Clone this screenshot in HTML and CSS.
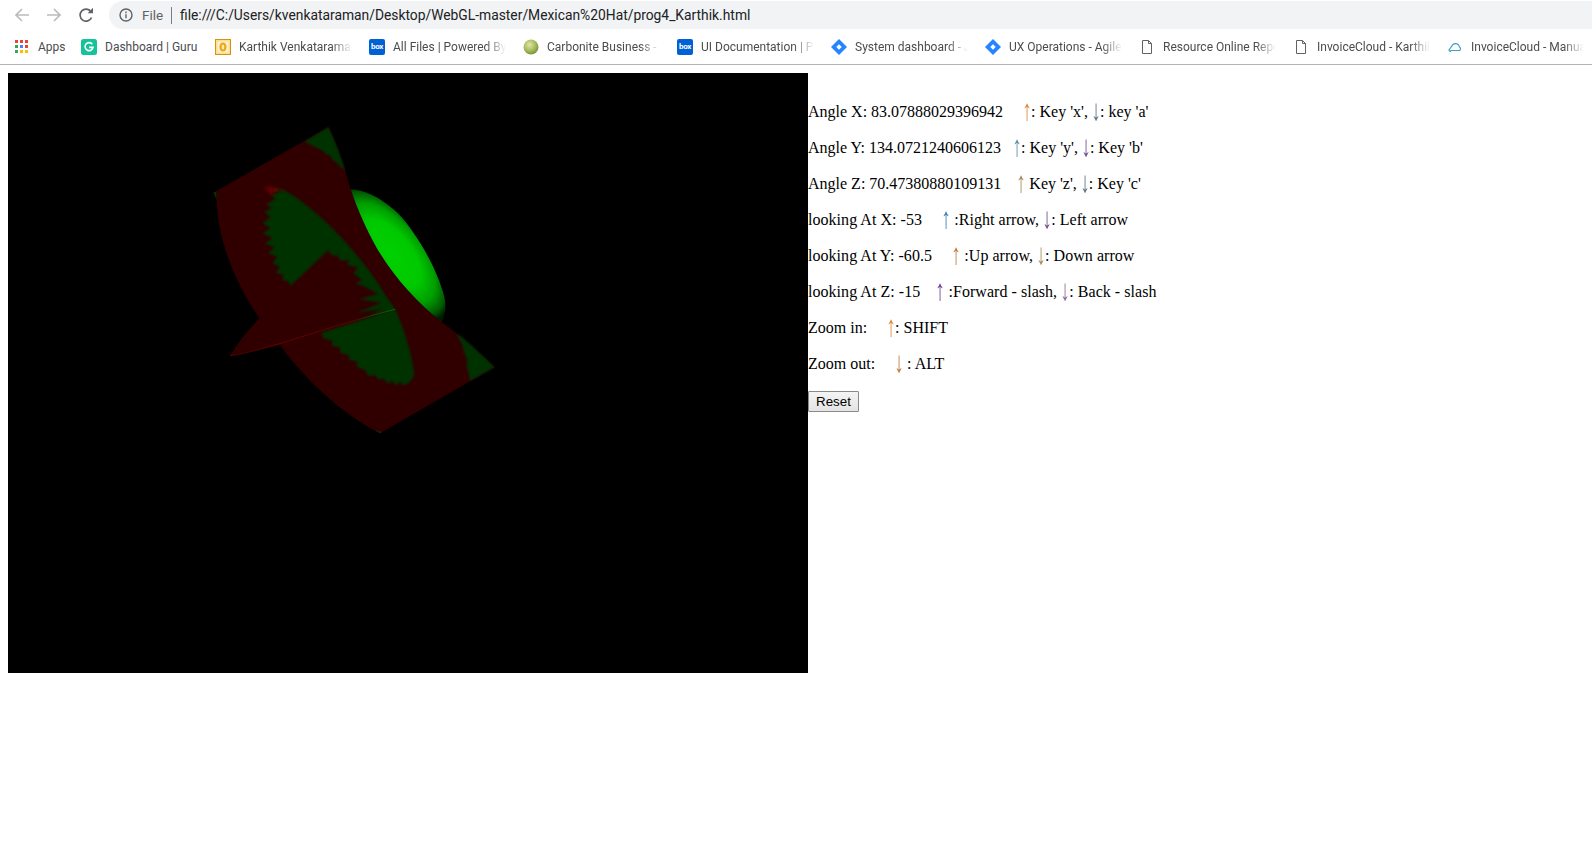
FILE: index.html
```html
<!DOCTYPE html>
<html lang="en">
<head>
<meta charset="utf-8">
<title>prog4_Karthik</title>
<link rel="stylesheet" href="styles.css">
</head>
<body>
<header class="chrome">
  <div class="toolbar">
    <svg class="nav nav-back" viewBox="0 0 16 16"><path d="M15 8H2M8 2 2 8l6 6"/></svg>
    <svg class="nav nav-fwd" viewBox="0 0 16 16"><path d="M1 8h13M8 2l6 6-6 6"/></svg>
    <svg class="nav nav-reload" viewBox="0 0 16 16"><path d="M13.6 10.5A6 6 0 1 1 13 4.7"/><path class="fill" d="M9.6 6.2H15V.8z"/></svg>
    <div class="omnibox">
      <svg class="info" viewBox="0 0 14 14"><circle cx="7" cy="7" r="6"/><path d="M7 6.2v4M7 3.6v1.6"/></svg>
      <span class="scheme">File</span>
      <span class="divider"></span>
      <span class="url">file:///C:/Users/kvenkataraman/Desktop/WebGL-master/Mexican%20Hat/prog4_Karthik.html</span>
    </div>
  </div>
  <nav class="bookmarks">
    <a class="bm bm-apps">
      <svg class="ico-apps" viewBox="0 0 13 13">
        <rect class="d-r" x="0" y="0" width="3" height="3"/><rect class="d-r" x="5" y="0" width="3" height="3"/><rect class="d-r" x="10" y="0" width="3" height="3"/>
        <rect class="d-g" x="0" y="5" width="3" height="3"/><rect class="d-b" x="5" y="5" width="3" height="3"/><rect class="d-r" x="10" y="5" width="3" height="3"/>
        <rect class="d-g" x="0" y="10" width="3" height="3"/><rect class="d-y" x="5" y="10" width="3" height="3"/><rect class="d-y" x="10" y="10" width="3" height="3"/>
      </svg>
      <span class="bm-text bm-apps-text">Apps</span>
    </a>
    <a class="bm bm-guru">
      <svg class="ico" viewBox="0 0 16 16"><rect width="16" height="16" rx="2.5" fill="#15c39a"/><path d="M11.3 5.2A4 4 0 1 0 12 8.4H8.2" fill="none" stroke="#fff" stroke-width="1.6"/></svg>
      <span class="bm-text bm-guru-text">Dashboard | Guru</span>
    </a>
    <a class="bm">
      <svg class="ico" viewBox="0 0 16 16"><rect x=".5" y=".5" width="15" height="15" fill="#fbe08a" stroke="#d9920f"/><rect x="2.5" y="2.5" width="11" height="11" fill="#f5f0dc"/><ellipse cx="8" cy="8" rx="3.6" ry="4.6" fill="#f0a80e"/><ellipse cx="8" cy="8" rx="1.3" ry="2.6" fill="#fbe9b0"/></svg>
      <span class="bm-text">Karthik Venkataraman</span>
    </a>
    <a class="bm">
      <span class="ico-box">box</span>
      <span class="bm-text">All Files | Powered By Box</span>
    </a>
    <a class="bm">
      <svg class="ico" viewBox="0 0 16 16"><defs><radialGradient id="carb" cx=".4" cy=".35" r=".7"><stop offset="0" stop-color="#e3e6a8"/><stop offset=".6" stop-color="#a4b95a"/><stop offset="1" stop-color="#6f8f3a"/></radialGradient></defs><circle cx="8" cy="8" r="7.5" fill="url(#carb)"/></svg>
      <span class="bm-text">Carbonite Business - Login</span>
    </a>
    <a class="bm">
      <span class="ico-box">box</span>
      <span class="bm-text">UI Documentation | Powered</span>
    </a>
    <a class="bm">
      <svg class="ico" viewBox="0 0 16 16"><path d="M8 0l8 8-8 8-8-8z" fill="#2684ff"/><path d="M8 5.3 10.7 8 8 10.7 5.3 8z" fill="#fff"/></svg>
      <span class="bm-text">System dashboard - Jira Soft</span>
    </a>
    <a class="bm">
      <svg class="ico" viewBox="0 0 16 16"><path d="M8 0l8 8-8 8-8-8z" fill="#2684ff"/><path d="M8 5.3 10.7 8 8 10.7 5.3 8z" fill="#fff"/></svg>
      <span class="bm-text">UX Operations - Agile Board</span>
    </a>
    <a class="bm">
      <svg class="ico" viewBox="0 0 16 16"><path d="M3.500 1.500h6l3 3v10h-9z M9.500 1.500v3h3" fill="none" stroke="#5f6368"/></svg>
      <span class="bm-text">Resource Online Reports</span>
    </a>
    <a class="bm">
      <svg class="ico" viewBox="0 0 16 16"><path d="M3.500 1.500h6l3 3v10h-9z M9.500 1.500v3h3" fill="none" stroke="#5f6368"/></svg>
      <span class="bm-text">InvoiceCloud - Karthik Venk</span>
    </a>
    <a class="bm">
      <svg class="ico" viewBox="0 0 16 16"><path d="M4 11.500H12.500A2 2 0 0 0 12.500 8 A4 4 0 0 0 6 5.500 L2 11 A1 1 0 0 0 4 11.500Z" fill="none" stroke="#3f9fbf" stroke-width="1.200"/></svg>
      <span class="bm-text">InvoiceCloud - Manual Pay</span>
    </a>
  </nav>
</header>

<main class="page">
  <div class="gl-canvas">
    <svg class="gl-scene" width="800" height="600" viewBox="0 0 800 600">
      <defs>
        <radialGradient id="sphere" gradientUnits="userSpaceOnUse" cx="0" cy="0" r="1" gradientTransform="translate(575 430) rotate(51.5) scale(240 115)">
          <stop offset="0" stop-color="#00d000"/>
          <stop offset=".5" stop-color="#00c800"/>
          <stop offset=".75" stop-color="#009c00"/>
          <stop offset=".92" stop-color="#005800"/>
          <stop offset="1" stop-color="#001c00"/>
        </radialGradient>
        <linearGradient id="flare" gradientUnits="userSpaceOnUse" x1="185" y1="232" x2="255" y2="245">
          <stop offset="0" stop-color="#300000"/>
          <stop offset=".4" stop-color="#6a0000"/>
          <stop offset=".75" stop-color="#3a1000"/>
          <stop offset="1" stop-color="#006000"/>
        </linearGradient>
        <linearGradient id="seam" gradientUnits="userSpaceOnUse" x1="90" y1="737" x2="585" y2="598">
          <stop offset="0" stop-color="#7a0000"/>
          <stop offset=".75" stop-color="#7a0000"/>
          <stop offset=".85" stop-color="#006000"/>
          <stop offset="1" stop-color="#009000"/>
        </linearGradient>
        <filter id="soft" x="-10%" y="-10%" width="120%" height="120%"><feGaussianBlur stdDeviation="2.500"/></filter>
      </defs>
      <g transform="translate(192 37) scale(.33333)">
        <path fill="url(#sphere)" d="M452 238C500 240 570 275 620 340C670 405 715 490 733 560C740 590 735 615 725 637L600 560L470 320Z"/>
        <path fill="#a06000" opacity=".55" filter="url(#soft)" d="M535 428C548 445 560 465 570 485L585 500C565 480 545 455 535 428Z"/>
        <path fill="#300000" d="M40 248L385 52C405 95 420 135 435 180C450 240 480 320 520 395C565 480 640 570 730 640C790 685 840 730 883 772L540 970C450 925 330 830 240 705L90 737C115 695 145 660 178 625C100 510 50 380 50 260Z"/>
        <g filter="url(#soft)">
          <path fill="#003300" d="M315 95L385 52C405 95 420 135 435 180L422 172L412 160L398 150L392 138L378 132L362 118L348 112L332 104Z"/>
          <path fill="#003300" d="M770 670C815 705 850 740 883 772L810 812L806 790L800 770L802 748L792 728L788 706L778 688Z"/>
          <path fill="#003300" d="M250 240C340 285 470 420 540 530C565 570 580 590 586 598L505 616L550 596L470 608L545 578L478 568L535 552L495 530L465 520L488 510L460 490L474 472L440 465L448 450L420 452L415 438L395 436L385 420L272 527L262 512L246 510L252 495L228 488L240 470L218 460L232 440L204 430L224 412L194 400L218 385L188 370L212 355L188 340L212 322L192 305L216 295L198 282L226 268L214 254Z"/>
          <path fill="#003300" d="M585 598C610 650 635 730 642 790C640 810 625 822 610 826L600 815L590 826L575 812L565 822L552 806L535 808L525 795L505 798L495 780L470 770L472 755L445 748L448 735L422 730L420 712L395 708L398 692L370 685L365 668Z"/>
        </g>
        <path fill="#003300" d="M40 248L48 245L50 270Z"/>
        <path fill="#003300" d="M525 960L540 970L546 966Z"/>
        <path fill="url(#flare)" filter="url(#soft)" d="M182 232C205 226 230 232 256 242C240 240 225 246 215 256C205 245 195 238 182 232Z"/>
        <path fill="none" stroke="url(#seam)" stroke-width="2" d="M90 737C190 725 380 650 585 598"/>
      </g>
    </svg>
  </div>

  <section class="controls">
    <p class="line">Angle X: 83.07888029396942 &nbsp; &nbsp; <span class="arrow a-orange">↑</span>: Key 'x', <span class="arrow a-slate">↓</span>: key 'a'</p>
    <p class="line">Angle Y: 134.0721240606123 &nbsp; <span class="arrow a-teal">↑</span>: Key 'y', <span class="arrow a-purple">↓</span>: Key 'b'</p>
    <p class="line">Angle Z: 70.47380880109131 &nbsp; &nbsp;<span class="arrow a-tan">↑</span> Key 'z', <span class="arrow a-slate">↓</span>: Key 'c'</p>
    <p class="line line-wide">looking At X: -53 &nbsp; &nbsp; <span class="arrow a-blue">↑</span> :Right arrow, <span class="arrow a-purple">↓</span>: Left arrow</p>
    <p class="line line-wide">looking At Y: -60.5 &nbsp; &nbsp; <span class="arrow a-rust">↑</span> :Up arrow, <span class="arrow a-tan">↓</span>: Down arrow</p>
    <p class="line line-wide">looking At Z: -15 &nbsp; &nbsp;<span class="arrow a-violet">↑</span> :Forward - slash, <span class="arrow a-mauve">↓</span>: Back - slash</p>
    <p class="line">Zoom in: &nbsp; &nbsp; <span class="arrow a-orange">↑</span>: SHIFT</p>
    <p class="line">Zoom out: &nbsp; &nbsp; <span class="arrow a-rust">↓</span> : ALT</p>
    <button class="reset" type="button">Reset</button>
  </section>
</main>
</body>
</html>
```
FILE: styles.css
```css
* { box-sizing: border-box; }

html, body {
  margin: 0;
  height: 100%;
  background: #fff;
  overflow: hidden;
}

.chrome {
  height: 65px;
  border-bottom: 1px solid #b4b4b4;
  font-family: Roboto, sans-serif;
}

.toolbar {
  display: flex;
  align-items: center;
  height: 29px;
  padding-top: 1px;
}

.nav {
  width: 16px;
  height: 16px;
  fill: none;
  stroke-width: 1.7;
}
.nav .fill { fill: #5f6368; stroke: none; }
.nav-back { margin-left: 14px; stroke: #bcbcbc; }
.nav-fwd { margin-left: 16px; stroke: #bcbcbc; }
.nav-reload { margin-left: 16px; stroke: #5f6368; }

.omnibox {
  flex: 1;
  display: flex;
  align-items: center;
  height: 28px;
  margin-left: 15px;
  padding-left: 10px;
  background: #f1f3f4;
  border-radius: 14px 0 0 14px;
}

.info {
  width: 14px;
  height: 14px;
  fill: none;
  stroke: #5f6368;
  stroke-width: 1.4;
}

.scheme {
  width: 21px;
  margin-left: 9px;
  font-size: 13.500px;
  color: #5f6368;
}

.divider {
  width: 1px;
  height: 17px;
  margin: 0 8px 0 8px;
  background: #7a7d82;
}

.url {
  font-size: 13.830px;
  color: #202124;
  white-space: nowrap;
}

.bookmarks {
  display: flex;
  align-items: center;
  height: 35px;
  padding-left: 15px;
  overflow: hidden;
  font-size: 12px;
  color: #4a4c50;
}

.bm {
  display: flex;
  align-items: center;
  flex: none;
  gap: 8px;
  margin-right: 17px;
}
.bm-apps { gap: 10px; margin-right: 16px; }
.bm-guru { margin-right: 18px; }

.ico { width: 16px; height: 16px; flex: none; }
.ico-apps { width: 13px; height: 13px; flex: none; }
.d-r { fill: #ea4335; }
.d-g { fill: #34a853; }
.d-b { fill: #4285f4; }
.d-y { fill: #fbbc05; }

.ico-box {
  display: flex;
  align-items: center;
  justify-content: center;
  flex: none;
  width: 16px;
  height: 16px;
  border-radius: 2px;
  background: #0061d5;
  color: #fff;
  font-size: 8px;
  font-weight: 700;
  letter-spacing: -.4px;
}

.bm-text {
  width: 113px;
  overflow: hidden;
  white-space: nowrap;
  -webkit-mask-image: linear-gradient(to right, #000 82%, transparent 100%);
  mask-image: linear-gradient(to right, #000 82%, transparent 100%);
}
.bm-apps-text, .bm-guru-text {
  -webkit-mask-image: none;
  mask-image: none;
}
.bm-apps-text { width: 27px; }
.bm-guru-text { width: 92px; }

.page {
  display: flex;
  align-items: flex-start;
  padding: 8px;
}

.gl-canvas {
  flex: none;
  width: 800px;
  height: 600px;
  background: #000;
}
.gl-scene { display: block; }

.controls {
  padding-top: 30px;
  font-family: "Liberation Serif", serif;
  font-size: 16px;
  line-height: 18px;
  color: #000;
}

.line { margin: 0 0 18px; white-space: nowrap; }
.line-wide { letter-spacing: .04px; }

.arrow {
  display: inline-block;
  transform: scale(1.2, 1.85);
  transform-origin: 50% 58%;
}

.a-orange { color: #d98a3c; }
.a-slate { color: #5a7088; }
.a-teal { color: #5a8ea6; }
.a-purple { color: #6a4c90; }
.a-tan { color: #a8875a; }
.a-blue { color: #3c7cb0; }
.a-rust { color: #bf7a40; }
.a-violet { color: #6a3a98; }
.a-mauve { color: #8a6a90; }

.reset {
  display: block;
  width: 51px;
  height: 21px;
  margin: 0;
  padding: 0;
  border: 1px solid #8a8a8a;
  border-radius: 1px;
  background: linear-gradient(#f4f4f4, #e4e4e4);
  color: #000;
  font-family: "Liberation Sans", sans-serif;
  font-size: 13.333px;
}
```
